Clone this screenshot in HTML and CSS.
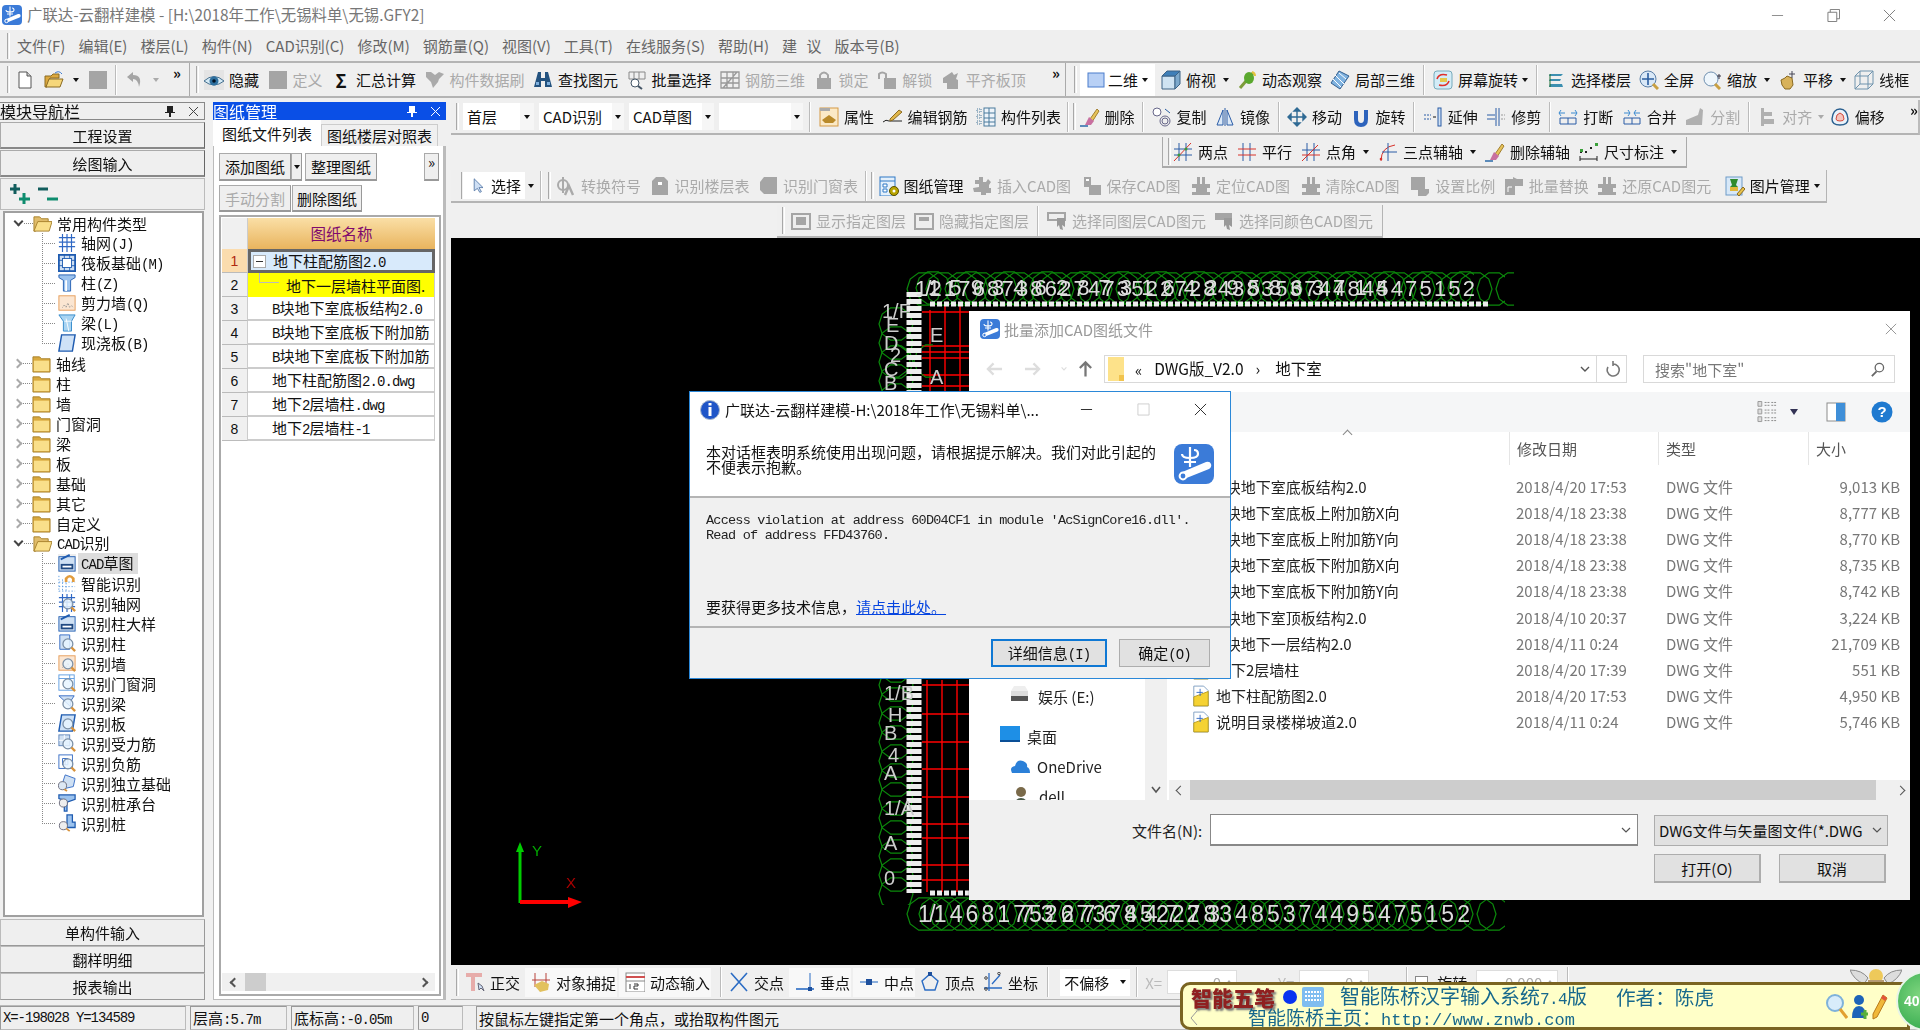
FILE: index.html
```html
<!DOCTYPE html>
<html lang="zh-CN">
<head>
<meta charset="utf-8">
<title>广联达-云翻样建模</title>
<link rel="stylesheet" href="styles.css">
</head>
<body>
<svg class="defs" width="0" height="0">
<defs>
<symbol id="logo" viewBox="0 0 20 20"><rect width="20" height="20" rx="4" fill="#3b7bd8"/><path d="M8 1.500v10M4 5q0 2 4 2t4-2-2-2M5 9h6" stroke="#fff" stroke-width="1.100" fill="none"/><path d="M3 14.500 16 9q2-.5 2.500 1t-1 2.500L5 17.500z" fill="#fff"/><circle cx="4.500" cy="16" r="1.700" fill="#3b7bd8" stroke="#fff"/></symbol>
<symbol id="doc" viewBox="0 0 20 20"><path d="M4 2h8l4 4v12H4z" fill="#fff" stroke="#555"/><path d="M12 2v4h4" fill="#ccc" stroke="#555"/></symbol>
<symbol id="open" viewBox="0 0 20 20"><path d="M1 6h6l2-2h6v4H6L3 17H1z" fill="#dca83e" stroke="#8a6a22"/><path d="M5 9h14l-3 8H2z" fill="#f6d77a" stroke="#8a6a22"/><path d="M11 3q4-3 7 1" stroke="#3a7bd5" fill="none"/></symbol>
<symbol id="gsq" viewBox="0 0 20 20"><rect x="1" y="1" width="18" height="18" fill="#a5a5a5"/></symbol>
<symbol id="undo" viewBox="0 0 20 20"><path d="M8 2 2 7l6 5V9q5 0 6 8 4-12-6-12z" fill="#a5a5a5"/></symbol>
<symbol id="eye" viewBox="0 0 20 20"><rect width="20" height="20" fill="#e4e4e4"/><path d="M0 11q10-9 20 0-10 8-20 0z" fill="#d5eaf5" stroke="#47708f"/><circle cx="10" cy="11" r="4.500" fill="#2d6f9e"/><circle cx="10" cy="11" r="1.800" fill="#012"/></symbol>
<symbol id="gbrush" viewBox="0 0 20 20"><path d="M1 2h5l4 3 4-3 5 2-5 5-1 3-5 6-2-6-5-5z" fill="#aaa"/></symbol>
<symbol id="binoc" viewBox="0 0 20 20"><path d="M5 2h3v6h4V2h3l4 15h-7V11H8v6H1z" fill="#23527f"/><path d="M3 12h3v3H3zM14 12h3v3h-3z" fill="#7fb0de"/></symbol>
<symbol id="batch" viewBox="0 0 20 20"><path d="M2 2h16v7H2z" fill="none" stroke="#888"/><path d="M7 2v7M12 2v7" stroke="#888"/><circle cx="8" cy="13" r="4" fill="#fff" stroke="#456"/><path d="m11 16 4 3" stroke="#456" stroke-width="2"/></symbol>
<symbol id="g3d" viewBox="0 0 20 20"><path d="M1 2h18v16H1zM7 2v16M13 2v16M1 8h18M1 13h18M3 18 17 2" fill="none" stroke="#999" stroke-width="1.300"/></symbol>
<symbol id="lock" viewBox="0 0 20 20"><path d="M6 9V5q4-5 8 0v4" fill="none" stroke="#a5a5a5" stroke-width="2"/><rect x="3" y="8" width="14" height="11" fill="#a5a5a5"/></symbol>
<symbol id="unlock" viewBox="0 0 20 20"><path d="M2 9V4q3-3 7 0v5" fill="none" stroke="#a5a5a5" stroke-width="2"/><rect x="7" y="8" width="12" height="11" fill="#a5a5a5"/></symbol>
<symbol id="gflag" viewBox="0 0 20 20"><path d="M2 8 11 2l2 3 4-2-2 6 2 1v9H6v-6H2z" fill="#a5a5a5"/></symbol>
<symbol id="r2d" viewBox="0 0 20 20"><rect x="2" y="3" width="16" height="14" fill="#b8d0f5" stroke="#4a7ccc"/></symbol>
<symbol id="cube" viewBox="0 0 20 20"><path d="M1 6h13v13H1z" fill="#cfe3f2" stroke="#3c6285"/><path d="m1 6 5-5h13l-5 5z" fill="#3f7fb8" stroke="#3c6285"/><path d="m14 6 5-5v13l-5 5z" fill="#7da9cc" stroke="#3c6285"/></symbol>
<symbol id="orbit" viewBox="0 0 20 20"><path d="M3 18 16 3" stroke="#7d9c3a" stroke-width="3"/><ellipse cx="12" cy="8" rx="5" ry="6" fill="#5aa82e"/><path d="M15 2q3 1 3 4" stroke="#e3c33e" stroke-width="2" fill="none"/></symbol>
<symbol id="local3d" viewBox="0 0 20 20"><path d="m9 1 10 5-9 13L1 13z" fill="#7fb2e0" stroke="#345f8f"/><path d="m5 5 9 9M9 3l7 6M3 9l8 8" stroke="#fff"/></symbol>
<symbol id="scrrot" viewBox="0 0 20 20"><rect x="1" y="1" width="18" height="18" rx="3" fill="#d3ecf7" stroke="#7ab"/><path d="M4 9q2-6 10-4M16 11q-2 6-10 4" stroke="#e0302a" stroke-width="1.600" fill="none"/><rect x="7" y="8" width="7" height="4" fill="#e6c84a"/></symbol>
<symbol id="floors" viewBox="0 0 20 20"><path d="M4 4h13l-2 2H3zM4 9h11l-1 2H3zM4 14h12l1 3H3z" fill="#3c8fb0"/><path d="M4 4v13" stroke="#1d6c2e"/></symbol>
<symbol id="full" viewBox="0 0 20 20"><circle cx="9" cy="9" r="8" fill="#d9e8f7" stroke="#5a7ea6"/><path d="M9 3v12M3 9h12" stroke="#2a5da0" stroke-width="1.600"/><path d="m14 14 5 5" stroke="#c9a042" stroke-width="3"/></symbol>
<symbol id="zoomi" viewBox="0 0 20 20"><circle cx="9" cy="9" r="7" fill="#eef6fc" stroke="#7090b0"/><path d="m13 14 5 5" stroke="#c9a042" stroke-width="3"/><path d="M17 4v5M15 6h4" stroke="#334"/></symbol>
<symbol id="hand" viewBox="0 0 20 20"><path d="M3 10 7 8l2-2 5 2 1 7-3 4H7l-3-4z" fill="#d8b25a" stroke="#8a6a22"/><path d="M14 1v7M11 4h6" stroke="#445"/></symbol>
<symbol id="wire" viewBox="0 0 20 20"><path d="M1 6h13v13H1zM1 6l5-5h13v13l-5 5M14 6l5-5M6 1v13h13M6 14l-5 5" fill="none" stroke="#6f93ad"/></symbol>
<symbol id="props" viewBox="0 0 20 20"><rect x="1" y="1" width="18" height="18" fill="#fbe9c6" stroke="#d59a45"/><path d="M1 1h10v3H1z" fill="#aaa"/><path d="m3 13 7-5 7 5-3 3H6z" fill="#b98a2a"/></symbol>
<symbol id="pen" viewBox="0 0 20 20"><path d="M0 15q3-3 6-1h13" fill="none" stroke="#222"/><path d="m7 12 9-9 3 2-9 8-3 1z" fill="#e0b64a" stroke="#8a6a22"/></symbol>
<symbol id="list" viewBox="0 0 20 20"><path d="M1 2h4v3H1zM1 8h4v3H1zM1 14h4v3H1z" fill="none" stroke="#4a7a9c" stroke-dasharray="1 1"/><rect x="8" y="1" width="11" height="18" fill="#eef4fa" stroke="#4a7a9c"/><path d="M8 6h11M8 11h11M8 15h11M13 1v18" stroke="#4a7a9c"/></symbol>
<symbol id="del" viewBox="0 0 20 20"><path d="m10 12 7-10 2 2-7 11z" fill="#e6c35a" stroke="#a27f30"/><path d="m5 18 4-8 5 4-3 4z" fill="#c870a0"/><path d="M0 19h8" stroke="#2a6aa8" stroke-width="1.500"/></symbol>
<symbol id="copy" viewBox="0 0 20 20"><circle cx="5" cy="5" r="4" fill="#fff" stroke="#668"/><circle cx="13" cy="14" r="5" fill="none" stroke="#668"/><circle cx="13" cy="14" r="3" fill="none" stroke="#668"/><path d="M13 2l5 4" stroke="#2a5da0"/></symbol>
<symbol id="mirror" viewBox="0 0 20 20"><path d="M8 3 2 18h6zM12 3l6 15h-6z" fill="#dce9f7" stroke="#2b5ca6"/><path d="M10 1v18" stroke="#2b5ca6"/></symbol>
<symbol id="move" viewBox="0 0 20 20"><path d="M10 1v18M1 10h18M10 1 7 4h6zM10 19l-3-3h6zM1 10l3-3v6zM19 10l-3-3v6z" fill="#2f6a94" stroke="#2f6a94" stroke-width="1.400"/></symbol>
<symbol id="rot" viewBox="0 0 20 20"><path d="M5 4v8q0 6 5 6t5-6V3" fill="none" stroke="#2d63bc" stroke-width="4"/></symbol>
<symbol id="extend" viewBox="0 0 20 20"><path d="M1 8h7M1 12h7" stroke="#2b5ca6" stroke-dasharray="2 1"/><path d="M10 10h3" stroke="#111"/><rect x="15" y="1" width="3" height="18" fill="#cfe0f3" stroke="#2b5ca6"/></symbol>
<symbol id="trim" viewBox="0 0 20 20"><path d="M1 8h8M1 12h8" stroke="#2b5ca6"/><path d="M10 1v18M13 1v18" stroke="#2b5ca6"/><path d="M15 8h4M15 12h4" stroke="#999" stroke-dasharray="2 1"/></symbol>
<symbol id="brk" viewBox="0 0 20 20"><path d="M2 11h16v6H2zM10 11v6" fill="none" stroke="#2b5ca6"/><path d="M1 6h6M13 6h6M3 3 1 6l2 3M17 3l2 3-2 3" stroke="#3a8ad0" fill="none"/></symbol>
<symbol id="merge" viewBox="0 0 20 20"><path d="M2 11h16v6H2zM10 11v6" fill="none" stroke="#2b5ca6"/><path d="M2 6h6M12 6h6M6 3l2 3-2 3M14 3l-2 3 2 3" stroke="#3a8ad0" fill="none"/></symbol>
<symbol id="gsplit" viewBox="0 0 20 20"><path d="M1 13 13 8l2-7 3 2-1 15H1z" fill="#b0b0b0"/></symbol>
<symbol id="galign" viewBox="0 0 20 20"><path d="M4 1h3v18H4zM7 5h8v4H7zM7 12h10v5H7z" fill="#b0b0b0"/></symbol>
<symbol id="offs" viewBox="0 0 20 20"><path d="M10 2q7 0 8 10 0 6-8 6t-8-6Q3 2 10 2z" fill="#eaf2fa" stroke="#2a5f8f" stroke-width="1.400"/><path d="M10 6q4 1 4 6 0 2-4 2t-4-2q0-5 4-6z" fill="#f6c4bc" stroke="#d34a3c"/></symbol>
<symbol id="twop" viewBox="0 0 20 20"><path d="M6 1v18M13 1v18M1 7h18M1 13h18" stroke="#2b5ca6"/><path d="M1 19 18 1" stroke="#d8322a"/><circle cx="6" cy="13" r="1.500" fill="#3a9a3a"/><circle cx="13" cy="7" r="1.500" fill="#3a9a3a"/></symbol>
<symbol id="para" viewBox="0 0 20 20"><path d="M6 1v18M13 1v18" stroke="#2b5ca6"/><path d="M1 7h18M1 13h18" stroke="#d8322a"/></symbol>
<symbol id="ang" viewBox="0 0 20 20"><path d="M6 1v18M13 1v18M1 8h18" stroke="#2b5ca6"/><path d="M1 19 17 3M1 13h18" stroke="#d8322a"/></symbol>
<symbol id="arcx" viewBox="0 0 20 20"><path d="M3 19Q3 5 17 3" fill="none" stroke="#d8322a"/><path d="M10 1v18M4 10h15" stroke="#2b5ca6"/><circle cx="3" cy="17" r="1.300" fill="#d8322a"/></symbol>
<symbol id="dim" viewBox="0 0 20 20"><path d="M1 14v5M18 14v5M1 17h17" stroke="#222"/><path d="M1 9h2v2H1zM6 9h2v2H6zM11 5h2v2h-2z" fill="#222"/><rect x="16" y="1" width="3" height="3" fill="#3aa03a"/><rect x="1" y="7" width="3" height="3" fill="#3aa03a"/></symbol>
<symbol id="cur" viewBox="0 0 20 20"><path d="m4 1 0 15 4-3 3 5 2-1-3-5h5z" fill="#cfe0f5" stroke="#4a6ea0"/></symbol>
<symbol id="gphi" viewBox="0 0 20 20"><circle cx="7" cy="9" r="5" fill="none" stroke="#aaa" stroke-width="2"/><path d="M7 1v16" stroke="#aaa" stroke-width="2"/><path d="m9 19 4-9 4 9" fill="none" stroke="#aaa" stroke-width="2.400"/></symbol>
<symbol id="gtag" viewBox="0 0 20 20"><path d="M6 1h8l4 4v14H2V5z" fill="#a5a5a5"/><rect x="8" y="6" width="4" height="3" fill="#fff"/></symbol>
<symbol id="gblob" viewBox="0 0 20 20"><path d="M6 1h13v17H6L2 14V6z" fill="#a5a5a5"/></symbol>
<symbol id="dmgr" viewBox="0 0 20 20"><rect x="1" y="1" width="15" height="19" fill="#e4f0fb" stroke="#2f78c5"/><path d="M1 5h15M4 8h4v3H4zM4 13h4v3H4z" stroke="#2f78c5" fill="#fff"/><circle cx="15" cy="15" r="4.500" fill="#b8a400" stroke="#5a5000"/><circle cx="15" cy="15" r="1.500" fill="#fff"/></symbol>
<symbol id="gpuz" viewBox="0 0 20 20"><path d="M7 1h4v5h3l2-3 3 3-2 3v3h2v5h-5v2h-5v-3H2l-1-4 6-1V8H3V4h4z" fill="#a5a5a5"/></symbol>
<symbol id="gsave" viewBox="0 0 20 20"><path d="M2 1h7v8h10v10H7V11H2z" fill="#a5a5a5"/><rect x="4" y="3" width="3" height="2" fill="#fff"/></symbol>
<symbol id="gloc" viewBox="0 0 20 20"><path d="M6 1h3v7h2V1h3v7h5v4h-3v4h3v3H1v-3h4v-4H1V8h5z" fill="#a5a5a5"/></symbol>
<symbol id="gscale" viewBox="0 0 20 20"><path d="M1 1h14v12h4v4l-3 3H8v-6H1z" fill="#a5a5a5"/></symbol>
<symbol id="grep" viewBox="0 0 20 20"><path d="M1 3h8V1l4 2h6v7h-8v9H1z" fill="#a5a5a5"/><path d="M4 11h4M4 11v5" stroke="#fff"/></symbol>
<symbol id="pic" viewBox="0 0 20 20"><rect x="1" y="1" width="16" height="18" fill="#d7e8f8" stroke="#6f9bc8"/><path d="M5 3h8l-2 6 2 2H5l2-2z" fill="#2e8b2e"/><path d="M5 11h8v4H5z" fill="#e0b83a"/><path d="m12 18 6-7 2 2-6 7z" fill="#e8c24a" stroke="#8a6a22"/></symbol>
<symbol id="gshow" viewBox="0 0 20 20"><path d="M1 3h18v15H1z" fill="#eee" stroke="#a5a5a5" stroke-width="2"/><path d="M5 6h10v8H5z" fill="#a5a5a5"/></symbol>
<symbol id="ghide" viewBox="0 0 20 20"><path d="M1 3h18v15H1z" fill="#eee" stroke="#a5a5a5" stroke-width="2"/><path d="M5 6h10v4H5z" fill="#a5a5a5"/></symbol>
<symbol id="gsel" viewBox="0 0 20 20"><path d="M1 2h17v7H1z" fill="#eee" stroke="#a5a5a5" stroke-width="2"/><path d="M10 7h8v9l-3-2 1 5-3-1-1-4-2 2z" fill="#999"/></symbol>
<symbol id="gsel2" viewBox="0 0 20 20"><path d="M1 2h17v7H1z" fill="#a5a5a5"/><path d="M10 7h8v9l-3-2 1 5-3-1-1-4-2 2z" fill="#999"/></symbol>
<symbol id="ortho" viewBox="0 0 20 20"><path d="M1 1h16v4h-7v14H6V5H1z" fill="#e7acaa"/><path d="m13 11 1 7 2-2 3 3-2-5z" fill="#cfe0f5" stroke="#667"/></symbol>
<symbol id="snap" viewBox="0 0 20 20"><path d="M4 1v14M15 1v14M1 8h18" stroke="#b8433a"/><path d="m3 13 8-4 7 3-1 6-8 2z" fill="#e2c15e"/></symbol>
<symbol id="dyni" viewBox="0 0 20 20"><rect x="1" y="1" width="19" height="19" fill="#fff" stroke="#888"/><path d="M1 5h19" stroke="#d05050" stroke-width="2"/><path d="M1 9h19" stroke="#888"/><path d="M5 12v5M9 12h4v2h-4v3h4" fill="none" stroke="#333"/></symbol>
<symbol id="xpt" viewBox="0 0 20 20"><path d="m2 1 16 18M18 1 2 19" stroke="#2b6cc4" stroke-width="1.600"/></symbol>
<symbol id="perp" viewBox="0 0 20 20"><path d="M1 17h18" stroke="#2b6cc4" stroke-width="1.600"/><path d="M15 1v16" stroke="#2b6cc4"/><rect x="13" y="15" width="4" height="4" fill="#1d4f9c"/></symbol>
<symbol id="midp" viewBox="0 0 20 20"><path d="M1 10h18" stroke="#5b8fd0" stroke-width="1.400"/><rect x="7" y="7" width="6" height="6" fill="#1d4f9c"/></symbol>
<symbol id="vert" viewBox="0 0 20 20"><path d="m10 2 8 7-3 9H5L2 9z" fill="none" stroke="#2b6cc4" stroke-width="1.400"/><rect x="8" y="0" width="4" height="4" fill="#1d4f9c"/></symbol>
<symbol id="coord" viewBox="0 0 20 20"><path d="M6 1v18M1 16h18M17 3 9 12" stroke="#2b6cc4" stroke-width="1.300"/><circle cx="3" cy="6" r="1.300" fill="none" stroke="#444"/><circle cx="16" cy="1.500" r="1.300" fill="none" stroke="#444"/><circle cx="3" cy="17" r="1.300" fill="none" stroke="#444"/></symbol>
<symbol id="fold" viewBox="0 0 20 20"><path d="M1 3h7l2 2h9v14H1z" fill="#d9a93e" stroke="#a8822c"/><path d="M2 7h16v11H2z" fill="#f9df8a"/></symbol>
<symbol id="foldo" viewBox="0 0 20 20"><path d="M1 3h6l2 2h7v4H6L3 18H1z" fill="#e0bc6a" stroke="#a8822c"/><path d="M5 8h15l-3 10H1z" fill="#f9df8a" stroke="#a8822c"/></symbol>
<symbol id="gridi" viewBox="0 0 20 20"><path d="M5 0v20M10 0v20M15 0v20M1 4h18M1 9h18M1 14h18" stroke="#2f68c4" stroke-width="1.300"/></symbol>
<symbol id="raft" viewBox="0 0 20 20"><rect x="1" y="1" width="18" height="18" fill="#cfe0f3" stroke="#1e5bb0" stroke-width="2"/><rect x="5" y="5" width="10" height="10" fill="#fff" stroke="#1e5bb0"/><path d="M1 7h4M1 13h4M15 7h4M15 13h4M7 1v4M13 1v4M7 15v4M13 15v4" stroke="#1e5bb0"/></symbol>
<symbol id="colm" viewBox="0 0 20 20"><path d="M1 1h18v3l-5 3v12H6V7L1 4z" fill="#9cc3ee" stroke="#1e5bb0"/><path d="M9 7v12" stroke="#fff" stroke-width="2"/></symbol>
<symbol id="walli" viewBox="0 0 20 20"><rect x="1" y="2" width="18" height="16" fill="#fbe6d2" stroke="#e59a55"/><path d="M5 15l2-3 2 3 2-5 2 5 2-2 2 2" stroke="#8a8a8a" fill="none" stroke-dasharray="1 1"/></symbol>
<symbol id="beam" viewBox="0 0 20 20"><path d="M1 1h18l-4 7v11H6V8z" fill="#a9d4f2" stroke="#2d86c8"/><path d="M7 8h8M9 5l3 14" stroke="#fff"/></symbol>
<symbol id="slab" viewBox="0 0 20 20"><path d="M4 1h15l-3 18H1z" fill="#cfe2f7" stroke="#1e5bb0" stroke-width="1.600"/></symbol>
<symbol id="cad" viewBox="0 0 20 20"><rect x="1" y="3" width="18" height="16" fill="#cfe0f3" stroke="#1e5bb0"/><path d="m3 6 10-5" stroke="#1e5bb0" stroke-width="2"/><rect x="3" y="11" width="14" height="6" fill="#214a82"/><rect x="5" y="13" width="10" height="2" fill="#fff"/></symbol>
<symbol id="smart" viewBox="0 0 20 20"><path d="M1 2v18M5 6v14M9 10v10M1 9h18M1 14h18M1 19h18" stroke="#5a9ae0" stroke-dasharray="1.500 2"/><path d="M9 9V5q4-5 8 0v4" fill="none" stroke="#e29c3c" stroke-width="3"/></symbol>
<symbol id="mag" viewBox="0 0 20 20"><circle cx="11" cy="11" r="5.500" fill="#e8f4ff" fill-opacity=".85" stroke="#7a8ea4" stroke-width="1.400"/><path d="m15 15 4 4" stroke="#d8923a" stroke-width="2.600"/></symbol>
<symbol id="r1" viewBox="0 0 20 20"><use href="#gridi"/><use href="#mag"/></symbol>
<symbol id="r2" viewBox="0 0 20 20"><path d="M2 1h11v16H2z" fill="#cfe0f3" stroke="#2f68c4"/><use href="#mag"/></symbol>
<symbol id="r3" viewBox="0 0 20 20"><use href="#walli"/><use href="#mag"/></symbol>
<symbol id="r4" viewBox="0 0 20 20"><rect x="1" y="1" width="17" height="17" fill="#fff" stroke="#5a9ae0"/><path d="M13 1v8M1 5h17" stroke="#5a9ae0"/><use href="#mag"/></symbol>
<symbol id="r5" viewBox="0 0 20 20"><path d="M1 2h17l-4 6v6z" fill="#cfe0f3" stroke="#2f68c4"/><use href="#mag"/></symbol>
<symbol id="r6" viewBox="0 0 20 20"><use href="#slab"/><use href="#mag"/></symbol>
<symbol id="r7" viewBox="0 0 20 20"><rect x="1" y="1" width="12" height="12" fill="#cfe0f3" stroke="#5a80b8"/><path d="M7 1v12M1 7h12" stroke="#fff"/><use href="#mag"/></symbol>
<symbol id="r8" viewBox="0 0 20 20"><rect x="1" y="1" width="15" height="15" fill="#fff" stroke="#2f68c4"/><path d="M5 5h6v7H5zM8 5v7" fill="none" stroke="#2f68c4"/><use href="#mag"/></symbol>
<symbol id="r9" viewBox="0 0 20 20"><path d="m8 1 11 4-2 9-9 2-3-6z" fill="#cfe0f3" stroke="#2f68c4"/><circle cx="5" cy="13" r="4.500" fill="#dde8f4" stroke="#667"/><path d="m7 17 3 2" stroke="#d8923a" stroke-width="2"/></symbol>
<symbol id="r10" viewBox="0 0 20 20"><path d="M1 1h18v5l-9 3v10H7V7L1 5z" fill="#9cc3ee" stroke="#1e5bb0" stroke-width="1.400"/><circle cx="6" cy="10" r="4.500" fill="#eee" stroke="#667"/></symbol>
<symbol id="r11" viewBox="0 0 20 20"><path d="M10 1h6v8h3v6H10z" fill="#9cc3ee" stroke="#1e5bb0" stroke-width="1.400"/><circle cx="6" cy="13" r="4.500" fill="#eee" stroke="#667"/><path d="m9 16 4 3" stroke="#d8923a" stroke-width="2"/></symbol>
<symbol id="dwg" viewBox="0 0 20 24"><path d="M2 1h11l5 5v17H2z" fill="#fff" stroke="#7a9cc0"/><path d="M2 13 18 7v16H2z" fill="#f5d233" stroke="#b89a1a"/><path d="M5 8h7M9 4v8" stroke="#2f68c4"/></symbol>
<symbol id="info" viewBox="0 0 20 20"><circle cx="10" cy="10" r="9.500" fill="#1f55c8" stroke="#a9b7cc"/><rect x="8.500" y="7" width="3" height="9" fill="#fff"/><rect x="8.500" y="3" width="3" height="2.500" fill="#fff"/></symbol>
<polygon id="ring" points="36,19 32.8,29 24.3,35.2 13.7,35.2 5.2,29 2,19 5.2,9 13.7,2.8 24.3,2.8 32.8,9" fill="none" stroke="#0a8a0a" stroke-width="1.200"/>
<pattern id="rp" width="38" height="38" patternUnits="userSpaceOnUse"><use href="#ring"/></pattern>
</defs>
</svg>

<div class="app">
  <div class="titlebar">
    <svg class="tlogo"><use href="#logo"/></svg>
    <span class="ttext">广联达-云翻样建模 - [H:\2018年工作\无锡料单\无锡.GFY2]</span>
    <span class="wbtns">
      <svg class="wb" viewBox="0 0 14 14"><path d="M1 7h12" stroke="#888"/></svg>
      <svg class="wb" viewBox="0 0 14 14"><path d="M1 3.500h9.500v10H1zM3.500 3.500V.5h10v10h-3" fill="none" stroke="#777"/></svg>
      <svg class="wb" viewBox="0 0 14 14"><path d="m1 1 12 12M13 1 1 13" stroke="#777"/></svg>
    </span>
  </div>
  <div class="menubar">
    <i class="gr"></i>
    <span>文件(F)</span><span>编辑(E)</span><span>楼层(L)</span><span>构件(N)</span><span>CAD识别(C)</span><span>修改(M)</span><span>钢筋量(Q)</span><span>视图(V)</span><span>工具(T)</span><span>在线服务(S)</span><span>帮助(H)</span><span class="sugg">建 议</span><span>版本号(B)</span>
  </div>
  <div class="toolrow r1">
    <div class="seg s1a">
      <i class="gr"></i>
      <svg class="ic ic-doc"><use href="#doc"/></svg>
      <svg class="ic ic-open"><use href="#open"/></svg><i class="dn"></i>
      <svg class="ic ic-save"><use href="#gsq"/></svg><i class="vs"></i>
      <svg class="ic ic-undo"><use href="#undo"/></svg><i class="dn dis"></i>
      <b class="more">»</b>
    </div>
    <div class="seg s1b">
      <i class="gr"></i>
      <span class="it"><svg class="ic"><use href="#eye"/></svg>隐藏</span>
      <span class="it off"><svg class="ic"><use href="#gsq"/></svg>定义</span>
      <span class="it"><em class="ic sg">Σ</em>汇总计算</span>
      <span class="it off"><svg class="ic"><use href="#gbrush"/></svg>构件数据刷</span>
      <span class="it"><svg class="ic"><use href="#binoc"/></svg>查找图元</span>
      <span class="it"><svg class="ic"><use href="#batch"/></svg>批量选择</span>
      <span class="it off"><svg class="ic"><use href="#g3d"/></svg>钢筋三维</span>
      <span class="it off"><svg class="ic"><use href="#lock"/></svg>锁定</span>
      <span class="it off"><svg class="ic"><use href="#unlock"/></svg>解锁</span>
      <span class="it off"><svg class="ic"><use href="#gflag"/></svg>平齐板顶</span>
      <b class="more">»</b>
    </div>
    <div class="seg s1c">
      <i class="gr"></i>
      <span class="it whitebox"><svg class="ic"><use href="#r2d"/></svg>二维<i class="dn"></i></span>
      <span class="it"><svg class="ic"><use href="#cube"/></svg>俯视<i class="dn"></i></span>
      <span class="it"><svg class="ic"><use href="#orbit"/></svg>动态观察</span>
      <span class="it"><svg class="ic"><use href="#local3d"/></svg>局部三维</span><i class="vs"></i>
      <span class="it"><svg class="ic"><use href="#scrrot"/></svg>屏幕旋转<i class="dn tight"></i></span><i class="vs"></i>
      <span class="it"><svg class="ic"><use href="#floors"/></svg>选择楼层</span>
      <span class="it"><svg class="ic"><use href="#full"/></svg>全屏</span>
      <span class="it"><svg class="ic"><use href="#zoomi"/></svg>缩放<i class="dn"></i></span>
      <span class="it"><svg class="ic"><use href="#hand"/></svg>平移<i class="dn"></i></span>
      <span class="it"><svg class="ic"><use href="#wire"/></svg>线框</span>
    </div>
  </div>

  <div class="main">
    <aside class="nav">
      <div class="phead"><span>模块导航栏</span><span class="ptools"><svg class="pin"><path d="M3 1h6v6h2v1H7v4H5V8H1V7h2z" fill="#222"/></svg><svg class="pin"><path d="m2 2 9 9M11 2l-9 9" stroke="#444"/></svg></span></div>
      <div class="navbtn nb1">工程设置</div>
      <div class="navbtn nb2">绘图输入</div>
      <div class="navtools">
        <svg class="pm" viewBox="0 0 22 22"><path d="M6 1v10M1 6h10" stroke="#125d5d" stroke-width="3"/><path d="M15 10v11M10 16h11" stroke="#0e8c6e" stroke-width="3"/></svg>
        <svg class="pm" viewBox="0 0 22 22"><path d="M1 6h10" stroke="#125d5d" stroke-width="3"/><path d="M10 16h11" stroke="#0e8c6e" stroke-width="3"/></svg>
      </div>
      <div class="tree">
        <div class="n"><i class="chev dn-c"></i><i class="st"></i><svg class="fi"><use href="#foldo"/></svg>常用构件类型</div>
        <div class="kids">
          <div class="k"><i class="br"></i><svg class="ti"><use href="#gridi"/></svg><span>轴网<tt>(J)</tt></span></div>
          <div class="k"><i class="br"></i><svg class="ti"><use href="#raft"/></svg><span>筏板基础<tt>(M)</tt></span></div>
          <div class="k"><i class="br"></i><svg class="ti"><use href="#colm"/></svg><span>柱<tt>(Z)</tt></span></div>
          <div class="k"><i class="br"></i><svg class="ti"><use href="#walli"/></svg><span>剪力墙<tt>(Q)</tt></span></div>
          <div class="k"><i class="br"></i><svg class="ti"><use href="#beam"/></svg><span>梁<tt>(L)</tt></span></div>
          <div class="k"><i class="br"></i><svg class="ti"><use href="#slab"/></svg><span>现浇板<tt>(B)</tt></span></div>
        </div>
        <div class="n"><i class="chev"></i><i class="st"></i><svg class="fi"><use href="#fold"/></svg>轴线</div>
        <div class="n"><i class="chev"></i><i class="st"></i><svg class="fi"><use href="#fold"/></svg>柱</div>
        <div class="n"><i class="chev"></i><i class="st"></i><svg class="fi"><use href="#fold"/></svg>墙</div>
        <div class="n"><i class="chev"></i><i class="st"></i><svg class="fi"><use href="#fold"/></svg>门窗洞</div>
        <div class="n"><i class="chev"></i><i class="st"></i><svg class="fi"><use href="#fold"/></svg>梁</div>
        <div class="n"><i class="chev"></i><i class="st"></i><svg class="fi"><use href="#fold"/></svg>板</div>
        <div class="n"><i class="chev"></i><i class="st"></i><svg class="fi"><use href="#fold"/></svg>基础</div>
        <div class="n"><i class="chev"></i><i class="st"></i><svg class="fi"><use href="#fold"/></svg>其它</div>
        <div class="n"><i class="chev"></i><i class="st"></i><svg class="fi"><use href="#fold"/></svg>自定义</div>
        <div class="n"><i class="chev dn-c"></i><i class="st"></i><svg class="fi"><use href="#foldo"/></svg><span><tt>CAD</tt>识别</span></div>
        <div class="kids">
          <div class="k sel"><i class="br"></i><svg class="ti"><use href="#cad"/></svg><span class="selt"><tt>CAD</tt>草图</span></div>
          <div class="k"><i class="br"></i><svg class="ti"><use href="#smart"/></svg>智能识别</div>
          <div class="k"><i class="br"></i><svg class="ti"><use href="#r1"/></svg>识别轴网</div>
          <div class="k"><i class="br"></i><svg class="ti"><use href="#cad"/></svg>识别柱大样</div>
          <div class="k"><i class="br"></i><svg class="ti"><use href="#r2"/></svg>识别柱</div>
          <div class="k"><i class="br"></i><svg class="ti"><use href="#r3"/></svg>识别墙</div>
          <div class="k"><i class="br"></i><svg class="ti"><use href="#r4"/></svg>识别门窗洞</div>
          <div class="k"><i class="br"></i><svg class="ti"><use href="#r5"/></svg>识别梁</div>
          <div class="k"><i class="br"></i><svg class="ti"><use href="#r6"/></svg>识别板</div>
          <div class="k"><i class="br"></i><svg class="ti"><use href="#r7"/></svg>识别受力筋</div>
          <div class="k"><i class="br"></i><svg class="ti"><use href="#r8"/></svg>识别负筋</div>
          <div class="k"><i class="br"></i><svg class="ti"><use href="#r9"/></svg>识别独立基础</div>
          <div class="k"><i class="br"></i><svg class="ti"><use href="#r10"/></svg>识别桩承台</div>
          <div class="k"><i class="br"></i><svg class="ti"><use href="#r11"/></svg>识别桩</div>
        </div>
      </div>
      <div class="navbtn lo">单构件输入</div>
      <div class="navbtn lo">翻样明细</div>
      <div class="navbtn lo">报表输出</div>
    </aside>

    <section class="dwgp">
      <div class="phead blue"><span>图纸管理</span><span class="ptools"><svg class="pin"><path d="M3 1h6v6h2v1H7v4H5V8H1V7h2z" fill="#fff"/></svg><svg class="pin"><path d="m2 2 9 9M11 2l-9 9" stroke="#fff"/></svg></span></div>
      <div class="tabs"><span class="tab on">图纸文件列表</span><span class="tab">图纸楼层对照表</span></div>
      <div class="pane">
        <div class="pbtns">
          <span class="pb w72">添加图纸</span><span class="pb w10"><i class="dn"></i></span><span class="pb w72 gapl">整理图纸</span><span class="pb pmore"><b>»</b></span>
        </div>
        <div class="pbtns b2">
          <span class="pb w72 dis">手动分割</span><span class="pb w70">删除图纸</span>
        </div>
        <div class="frame">
          <div class="dg">
            <div class="rh top"></div><div class="dh">图纸名称</div>
            <div class="rh cur1">1</div><div class="dc cur"><i class="minus"></i><span>地下柱配筋图<tt>2.0</tt></span></div>
            <div class="rh">2</div><div class="dc yel"><i class="ell"></i><span>地下一层墙柱平面图.</span></div>
            <div class="rh">3</div><div class="dc ind"><span><tt>B</tt>块地下室底板结构<tt>2.0</tt></span></div>
            <div class="rh">4</div><div class="dc ind"><span><tt>B</tt>块地下室底板下附加筋</span></div>
            <div class="rh">5</div><div class="dc ind"><span><tt>B</tt>块地下室底板下附加筋</span></div>
            <div class="rh">6</div><div class="dc ind"><span>地下柱配筋图<tt>2.0.dwg</tt></span></div>
            <div class="rh">7</div><div class="dc ind"><span>地下<tt>2</tt>层墙柱<tt>.dwg</tt></span></div>
            <div class="rh">8</div><div class="dc ind"><span>地下<tt>2</tt>层墙柱<tt>-1</tt></span></div>
          </div>
          <div class="hs"><i class="cl"></i><i class="thumb"></i><i class="cr"></i></div>
        </div>
      </div>
    </section>

    <section class="work">
      <div class="toolrow r2">
        <i class="gr g1"></i>
        <div class="flds">
          <div class="fld"><span class="cb w57">首层</span><i class="ca ca14"><i class="dn"></i></i></div>
          <div class="fld"><span class="cb w73">CAD识别</span><i class="ca"><i class="dn"></i></i></div>
          <div class="fld"><span class="cb w73">CAD草图</span><i class="ca"><i class="dn"></i></i></div>
          <div class="fld"><span class="cb w72"></span><i class="ca"><i class="dn"></i></i></div>
        </div>
        <i class="vs v6"></i>
        <span class="it"><svg class="ic"><use href="#props"/></svg>属性</span>
        <span class="it"><svg class="ic"><use href="#pen"/></svg>编辑钢筋</span>
        <span class="it"><svg class="ic"><use href="#list"/></svg>构件列表</span>
        <i class="vs v6"></i><i class="gr g2"></i>
        <span class="it"><svg class="ic"><use href="#del"/></svg>删除</span><i class="vs"></i>
        <span class="it"><svg class="ic"><use href="#copy"/></svg>复制</span>
        <span class="it"><svg class="ic"><use href="#mirror"/></svg>镜像</span><i class="vs"></i>
        <span class="it"><svg class="ic"><use href="#move"/></svg>移动</span>
        <span class="it"><svg class="ic"><use href="#rot"/></svg>旋转</span><i class="vs"></i>
        <span class="it"><svg class="ic"><use href="#extend"/></svg>延伸</span>
        <span class="it"><svg class="ic"><use href="#trim"/></svg>修剪</span><i class="vs"></i>
        <span class="it"><svg class="ic"><use href="#brk"/></svg>打断</span>
        <span class="it"><svg class="ic"><use href="#merge"/></svg>合并</span>
        <span class="it off"><svg class="ic"><use href="#gsplit"/></svg>分割</span><i class="vs"></i>
        <span class="it off"><svg class="ic"><use href="#galign"/></svg>对齐<i class="dn dis"></i></span>
        <span class="it"><svg class="ic"><use href="#offs"/></svg>偏移</span>
        <b class="more">»</b>
      </div>
      <div class="rowwrap rw3">
        <div class="toolrow r3">
          <i class="gr"></i>
          <span class="it"><svg class="ic"><use href="#twop"/></svg>两点</span>
          <span class="it"><svg class="ic"><use href="#para"/></svg>平行</span>
          <span class="it"><svg class="ic"><use href="#ang"/></svg>点角<i class="dn"></i></span>
          <span class="it"><svg class="ic"><use href="#arcx"/></svg>三点辅轴<i class="dn"></i></span>
          <span class="it"><svg class="ic"><use href="#del"/></svg>删除辅轴</span>
          <span class="it"><svg class="ic"><use href="#dim"/></svg>尺寸标注<i class="dn"></i></span>
        </div>
      </div>
      <div class="rowwrap rw4">
        <div class="toolrow r4">
          <i class="gr gf"></i>
          <span class="it whitebox sel2"><svg class="ic"><use href="#cur"/></svg>选择</span><i class="dn dk"></i><i class="vs"></i><i class="gr"></i>
          <span class="it off"><svg class="ic"><use href="#gphi"/></svg>转换符号</span>
          <span class="it off"><svg class="ic"><use href="#gtag"/></svg>识别楼层表</span>
          <span class="it off"><svg class="ic"><use href="#gblob"/></svg>识别门窗表</span><i class="vs"></i><i class="gr g4"></i>
          <span class="it"><svg class="ic"><use href="#dmgr"/></svg>图纸管理</span>
          <span class="it off wcad"><svg class="ic"><use href="#gpuz"/></svg>插入CAD图</span>
          <span class="it off wcad"><svg class="ic"><use href="#gsave"/></svg>保存CAD图</span>
          <span class="it off wcad"><svg class="ic"><use href="#gloc"/></svg>定位CAD图</span>
          <span class="it off wcad"><svg class="ic"><use href="#gloc"/></svg>清除CAD图</span>
          <span class="it off"><svg class="ic"><use href="#gscale"/></svg>设置比例</span>
          <span class="it off"><svg class="ic"><use href="#grep"/></svg>批量替换</span>
          <span class="it off wcad2"><svg class="ic"><use href="#gloc"/></svg>还原CAD图元</span>
          <span class="it"><svg class="ic"><use href="#pic"/></svg>图片管理<i class="dn tight"></i></span>
        </div>
      </div>
      <div class="rowwrap rw5">
        <div class="toolrow r5">
          <i class="gr"></i>
          <span class="it off"><svg class="ic"><use href="#gshow"/></svg>显示指定图层</span>
          <span class="it off"><svg class="ic"><use href="#ghide"/></svg>隐藏指定图层</span><i class="vs"></i>
          <span class="it off"><svg class="ic"><use href="#gsel"/></svg>选择同图层CAD图元</span>
          <span class="it off"><svg class="ic"><use href="#gsel2"/></svg>选择同颜色CAD图元</span>
        </div>
      </div>
      <div class="canvas">
        <svg class="cadsvg" viewBox="451 238 1469 727">
          <g class="reds">
            <path d="M922 312H969M922 346H969M922 352H969M922 358H969M922 375H969M922 386H969M945 305V391M960 305V391M930 310V391M922 685H969M922 714H969M922 742H969M922 769H969M922 797H969M922 824H969M922 838H969M922 865H969M922 880H969M927 680V892M942 680V892M957 680V892"/>
          </g>
          <g transform="translate(905,270)"><rect width="600" height="38" fill="url(#rp)"/><rect width="590" height="38" fill="url(#rp)" transform="translate(19,0)"/><rect width="560" height="38" fill="url(#rp)" transform="translate(9,-1)"/></g>
          <g transform="translate(877,305)"><rect width="38" height="600" fill="url(#rp)"/><rect width="38" height="570" fill="url(#rp)" transform="translate(0,19)"/></g>
          <g transform="translate(905,895)"><rect width="600" height="38" fill="url(#rp)"/><rect width="570" height="38" fill="url(#rp)" transform="translate(23,0)"/><rect width="500" height="38" fill="url(#rp)" transform="translate(12,0)"/></g>
          <rect x="895" y="340" width="38" height="38" fill="url(#rp)"/>
          <path class="wband" d="M914 292V391M914 679V893"/>
          <path class="wband wb2" d="M930 304H1490M930 893H969"/>
          <text class="cadt" x="915" y="296" textLength="560" lengthAdjust="spacing">1/2 1 7 6 8 7 3 8 6 2 7 4 7 3 5 2 2 7 2 8 4 3 8 3 5 3 7 4 4 8 4 5 4 7 5 1 5 2</text>
          <text class="cadt" x="928" y="295" textLength="460" lengthAdjust="spacing">1 5 9 3 4 6 2 8 7 3 1 6 4 2 9 5 8 6 3 7 1 4</text>
          <text class="cadl1" x="882" y="318">1/F</text><text class="cadl1" x="886" y="332">E</text><text class="cadl1" x="884" y="350">D</text><text class="cadl1" x="890" y="362">2</text><text class="cadl1" x="884" y="376">C</text><text class="cadl1" x="884" y="390">B</text>
          <text class="cadl1" x="930" y="342">E</text><text class="cadl1" x="930" y="384">A</text>
          <text class="cadl1" x="884" y="700">1/B</text><text class="cadl1" x="888" y="722">H</text><text class="cadl1" x="884" y="740">B</text><text class="cadl1" x="888" y="762">4</text><text class="cadl1" x="884" y="780">A</text><text class="cadl1" x="884" y="815">1/A</text><text class="cadl1" x="884" y="850">A</text><text class="cadl1" x="884" y="885">0</text>
          <text class="cadt big" x="918" y="922" textLength="552" lengthAdjust="spacing">1/1 4 6 8 1 7 5 2 6 7 3 7 4 5 2 2 7 8 3 4 8 5 3 7 4 4 9 5 4 7 5 1 5 2</text>
          <text class="cadt big" x="1020" y="922" textLength="200" lengthAdjust="spacing">7 3 2 7 6 8 4 7 2 3</text>
          <path d="M520 903V850" stroke="#0c0" stroke-width="3"/><path d="m516 852 4-10 4 10z" fill="#0c0"/>
          <path d="M520 902h50" stroke="#f00" stroke-width="4"/><path d="m568 897 14 5-14 6z" fill="#f00"/>
          <text class="axy" x="532" y="856">Y</text><text class="axx" x="566" y="888">X</text>
        </svg>
      </div>
      <div class="toolrow rb">
        <i class="gr"></i>
        <span class="it"><svg class="ic"><use href="#ortho"/></svg>正交</span>
        <span class="it tog"><svg class="ic"><use href="#snap"/></svg>对象捕捉</span>
        <span class="it tog"><svg class="ic"><use href="#dyni"/></svg>动态输入</span><i class="vs"></i>
        <span class="it"><svg class="ic"><use href="#xpt"/></svg>交点</span>
        <span class="it tog"><svg class="ic"><use href="#perp"/></svg>垂点</span>
        <span class="it tog"><svg class="ic"><use href="#midp"/></svg>中点</span>
        <span class="it"><svg class="ic"><use href="#vert"/></svg>顶点</span>
        <span class="it m3"><svg class="ic"><use href="#coord"/></svg>坐标</span><i class="vs"></i>
        <span class="cb w70b">不偏移<i class="dn"></i></span><i class="vs vx"></i>
        <span class="lab">X=</span><span class="spin w70c">0<i class="up"></i></span>
        <span class="lab ly">Y=</span><span class="spin w70c">0<i class="up"></i></span><i class="vs vr"></i>
        <i class="chk"></i><span class="lab lk">旋转</span><span class="spin w82">0.000<i class="up"></i></span><i class="vs"></i>
      </div>
    </section>
  </div>

  <div class="status">
    <span class="sb s1"><tt>X=-198028 Y=134589</tt></span>
    <span class="sb s2"><span>层高<tt>:5.7m</tt></span></span>
    <span class="sb s3"><span>底标高<tt>:-0.05m</tt></span></span>
    <span class="sb s4"><tt>0</tt></span>
    <span class="sb s5">按鼠标左键指定第一个角点，或抬取构件图元</span>
  </div>

  <!-- 批量添加CAD图纸文件 window -->
  <div class="fd">
    <div class="fdtitle"><svg class="fdlogo"><use href="#logo"/></svg><span>批量添加CAD图纸文件</span><svg class="fdx" viewBox="0 0 14 14"><path d="m1 1 12 12M13 1 1 13" stroke="#888"/></svg></div>
    <div class="fdnav">
      <svg class="arw a1" viewBox="0 0 18 18"><path d="M17 9H2M8 3 2 9l6 6" fill="none" stroke="#ddd" stroke-width="2.400"/></svg>
      <svg class="arw a2" viewBox="0 0 18 18"><path d="M1 9h15M10 3l6 6-6 6" fill="none" stroke="#ddd" stroke-width="2.400"/></svg>
      <svg class="arw a3" viewBox="0 0 10 18"><path d="m2 7 3 3 3-3" fill="none" stroke="#ddd" stroke-width="1.500"/></svg>
      <svg class="arw a4" viewBox="0 0 18 18"><path d="M9 17V2M3 8l6-6 6 6" fill="none" stroke="#777" stroke-width="2.400"/></svg>
      <div class="addr">
        <svg class="afold" viewBox="0 0 16 24"><path d="M0 0h16v24H0z" fill="#fde28a"/><path d="M11 18h5v6h-5z" fill="#f1c34d"/></svg>
        <span class="cr1">«</span><span>DWG版_V2.0</span><span class="cr2">›</span><span>地下室</span>
        <span class="addrr"><svg class="dnv" viewBox="0 0 12 12"><path d="m2 4 4 4 4-4" fill="none" stroke="#555" stroke-width="1.400"/></svg><i class="addrs"></i><svg class="rfr" viewBox="0 0 16 16"><path d="M8 3a6 6 0 1 1-5 3M8 0v5" fill="none" stroke="#777" stroke-width="1.600"/></svg></span>
      </div>
      <div class="srch"><span>搜索"地下室"</span><svg class="mg" viewBox="0 0 16 16"><circle cx="10" cy="6" r="4.500" fill="none" stroke="#666" stroke-width="1.400"/><path d="m7 10-5 5" stroke="#666" stroke-width="2"/></svg></div>
    </div>
    <div class="fdband">
      <svg class="vi" viewBox="0 0 22 26"><path d="M1 2h4v5H1zM1 10h4v5H1zM1 18h4v5H1z" fill="#ddd" stroke="#999"/><path d="M8 3h5M15 3h5M8 6h5M15 6h5M8 11h5M15 11h5M8 14h5M15 14h5M8 19h5M15 19h5M8 22h5M15 22h5" stroke="#888" stroke-dasharray="2 1"/></svg>
      <i class="bd"></i>
      <svg class="vp" viewBox="0 0 20 20"><rect x="1" y="1" width="18" height="18" fill="#fff" stroke="#8c8c8c"/><rect x="10" y="1" width="9" height="18" fill="#3f8fd8"/></svg>
      <svg class="help" viewBox="0 0 22 22"><circle cx="11" cy="11" r="10.500" fill="#1f7ad0"/><text x="11" y="16" class="qm">?</text></svg>
    </div>
    <div class="fdbody">
      <div class="fdleft">
        <div class="fl l1"><svg class="fli"><path d="M0 5h17v10H0z" fill="#ddd"/><path d="M0 10h17v5H0z" fill="#555"/><path d="M3 0h11l3 5H0z" fill="#eee"/></svg>娱乐 (E:)</div>
        <div class="fl l2"><svg class="fli"><rect width="20" height="16" fill="#1e8fe6"/><rect y="14" width="20" height="2" fill="#0a4f96"/></svg>桌面</div>
        <div class="fl l3"><svg class="fli"><path d="M2 17q-3-6 3-7 2-7 8-5 5 2 4 6 3 1 3 6z" fill="#2b80d8"/></svg>OneDrive</div>
        <div class="fl l4"><svg class="fli"><circle cx="9" cy="6" r="5" fill="#7a6a4a"/><path d="M2 20q1-8 7-8t7 8z" fill="#4a5a4a"/></svg>dell</div>
      </div>
      <div class="fdvs"><svg class="fdc" viewBox="0 0 12 10"><path d="m2 2 4 5 4-5" fill="none" stroke="#555" stroke-width="1.600"/></svg></div>
      <div class="fdlist">
        <div class="fh"><i class="caret"></i><span class="c1">修改日期</span><span class="c2">类型</span><span class="c3">大小</span></div>
        <div class="fr"><svg class="fic"><use href="#dwg"/></svg><span class="fname">B块地下室底板结构2.0</span><span class="fdate">2018/4/20 17:53</span><span class="ftype">DWG 文件</span><span class="fsize">9,013 KB</span></div>
        <div class="fr"><svg class="fic"><use href="#dwg"/></svg><span class="fname">B块地下室底板上附加筋X向</span><span class="fdate">2018/4/18 23:38</span><span class="ftype">DWG 文件</span><span class="fsize">8,777 KB</span></div>
        <div class="fr"><svg class="fic"><use href="#dwg"/></svg><span class="fname">B块地下室底板上附加筋Y向</span><span class="fdate">2018/4/18 23:38</span><span class="ftype">DWG 文件</span><span class="fsize">8,770 KB</span></div>
        <div class="fr"><svg class="fic"><use href="#dwg"/></svg><span class="fname">B块地下室底板下附加筋X向</span><span class="fdate">2018/4/18 23:38</span><span class="ftype">DWG 文件</span><span class="fsize">8,735 KB</span></div>
        <div class="fr"><svg class="fic"><use href="#dwg"/></svg><span class="fname">B块地下室底板下附加筋Y向</span><span class="fdate">2018/4/18 23:38</span><span class="ftype">DWG 文件</span><span class="fsize">8,742 KB</span></div>
        <div class="fr"><svg class="fic"><use href="#dwg"/></svg><span class="fname">B块地下室顶板结构2.0</span><span class="fdate">2018/4/10 20:37</span><span class="ftype">DWG 文件</span><span class="fsize">3,224 KB</span></div>
        <div class="fr"><svg class="fic"><use href="#dwg"/></svg><span class="fname">B块地下一层结构2.0</span><span class="fdate">2018/4/11 0:24</span><span class="ftype">DWG 文件</span><span class="fsize">21,709 KB</span></div>
        <div class="fr"><svg class="fic"><use href="#dwg"/></svg><span class="fname">地下2层墙柱</span><span class="fdate">2018/4/20 17:39</span><span class="ftype">DWG 文件</span><span class="fsize">551 KB</span></div>
        <div class="fr"><svg class="fic"><use href="#dwg"/></svg><span class="fname">地下柱配筋图2.0</span><span class="fdate">2018/4/20 17:53</span><span class="ftype">DWG 文件</span><span class="fsize">4,950 KB</span></div>
        <div class="fr"><svg class="fic"><use href="#dwg"/></svg><span class="fname">说明目录楼梯坡道2.0</span><span class="fdate">2018/4/11 0:24</span><span class="ftype">DWG 文件</span><span class="fsize">5,746 KB</span></div>
        <div class="fhs"><i class="cl"></i><i class="fthumb"></i><i class="cr"></i></div>
      </div>
    </div>
    <div class="fdfoot">
      <div class="ff1"><span class="fnl">文件名(N):</span><span class="finp"><svg class="dnv" viewBox="0 0 12 12"><path d="m2 4 4 4 4-4" fill="none" stroke="#555" stroke-width="1.200"/></svg></span><span class="fsel"><span class="fselt">DWG文件与矢量图文件(*.DWG</span><svg class="dnv" viewBox="0 0 12 12"><path d="m2 4 4 4 4-4" fill="none" stroke="#555" stroke-width="1.200"/></svg></span></div>
      <div class="ff2"><span class="fb">打开(O)</span><span class="fb">取消</span></div>
    </div>
  </div>

  <!-- error dialog -->
  <div class="err">
    <div class="errtop">
      <div class="errtitle"><svg class="einfo"><use href="#info"/></svg><span class="ettext">广联达-云翻样建模-H:\2018年工作\无锡料单\...</span>
        <span class="ewb"><svg class="wb" viewBox="0 0 14 14"><path d="M1 7h12" stroke="#222"/></svg><svg class="wb" viewBox="0 0 14 14"><path d="M1 1h12v12H1z" fill="none" stroke="#ccc"/></svg><svg class="wb" viewBox="0 0 14 14"><path d="m1 1 12 12M13 1 1 13" stroke="#222"/></svg></span>
      </div>
      <div class="errmsg"><p>本对话框表明系统使用出现问题，请根据提示解决。我们对此引起的不便表示抱歉。</p><svg class="elogo"><use href="#logo"/></svg></div>
    </div>
    <div class="errmid">
      <p class="trace">Access violation at address 60D04CF1 in module 'AcSignCore16.dll'.<br>Read of address FFD43760.</p>
      <p class="more-info">要获得更多技术信息，<a class="lnk">请点击此处。</a></p>
    </div>
    <div class="errfoot"><span class="eb pri"><span>详细信息<tt>(I)</tt></span></span><span class="eb"><span>确定<tt>(O)</tt></span></span></div>
  </div>

  <!-- input method bar -->
  <div class="angel"><svg viewBox="0 0 52 18" width="52" height="18"><path d="M0 2q12 0 18 8l-4 6Q4 12 0 2zM52 2q-12 0-18 8l4 6q10-4 14-14z" fill="#ddd" stroke="#888"/><circle cx="26" cy="8" r="7" fill="#eec95a"/><rect x="18" y="12" width="16" height="6" fill="#b59a72"/></svg></div>
  <div class="ime">
    <div class="imel1"><b class="wb5">智能五笔</b><i class="dot"></i><svg class="kb" viewBox="0 0 22 20"><rect width="22" height="20" rx="2" fill="#7fbdf0"/><path d="M3 5h16M3 9h16M3 13h16" stroke="#fff" stroke-dasharray="2 1" stroke-width="2"/></svg><span class="iname">智能陈桥汉字输入系统<tt>7.4</tt>版</span><span class="iauth">作者：陈虎</span></div>
    <div class="imel2"><svg class="ich" viewBox="0 0 8 16"><path d="M7 1 1 8l6 7" fill="none" stroke="#999"/></svg><span class="iurl">智能陈桥主页：<tt>http://www.znwb.com</tt></span></div>
    <div class="imeicons">
      <svg class="ii" viewBox="0 0 22 26"><circle cx="9" cy="9" r="8" fill="#d8ecfa" stroke="#7fb2da" stroke-width="2"/><path d="m14 15 7 9" stroke="#e2a030" stroke-width="3"/></svg>
      <svg class="ii" viewBox="0 0 16 26"><circle cx="7" cy="6" r="5" fill="#1d63b8"/><path d="M0 24q0-12 7-12t7 12z" fill="#1d63b8"/><path d="M13 16v9M9 20h7" stroke="#58b03a" stroke-width="3"/></svg>
      <svg class="ii" viewBox="0 0 16 26"><path d="M11 1l4 3-10 19-4 2v-5z" fill="#f0b83a" stroke="#b87a1a"/><path d="m11 1 4 3-2 3-4-3z" fill="#e2553a"/></svg>
    </div>
  </div>
  <div class="ball"><span>40</span></div>
</div>
</body>
</html>
```

FILE: styles.css
```css
* { box-sizing: border-box; }
html, body { margin: 0; height: 100%; background: #f0f0f0; overflow: hidden; }
body { font: 15px/1 "Noto Sans CJK SC", "Liberation Sans", sans-serif; color: #111; }
.defs { position: absolute; }
i, em { font-style: normal; display: block; flex: none; }
b { font-weight: 400; }
tt { font: 14px/1 "Liberation Mono", monospace; letter-spacing: -.9px; }
p { margin: 0; }

.app { position: relative; width: 1920px; height: 1030px; display: flex; flex-direction: column; filter: blur(.35px); overflow: hidden; }

/* title */
.titlebar { height: 30px; background: #fff; display: flex; align-items: center; padding-left: 2px; flex: none; }
.tlogo { width: 20px; height: 20px; margin-right: 5px; }
.ttext { color: #777; font-size: 15.400px; }
.wbtns { margin-left: auto; display: flex; gap: 43px; padding-right: 24px; }
.wb { width: 13px; height: 13px; flex: none; }

/* menu */
.menubar { height: 31px; flex: none; display: flex; align-items: center; background: #efefef; color: #666; padding-left: 7px; gap: 13px; }
.menubar .gr { margin-right: -6px; height: 26px; }
.sugg { word-spacing: 6px; }
.gr { width: 3px; height: 27px; border-left: 1px solid #a8a8a8; border-right: 1px solid #fff; flex: none; }
.vs { width: 2px; height: 30px; border-left: 1px solid #bbb; border-right: 1px solid #fff; flex: none; }
.dn { width: 0; height: 0; border: 3.500px solid transparent; border-top: 4px solid #111; border-bottom: 0; margin-left: 6px; flex: none; }
.dn.dis { border-top-color: #aaa; }
.dn.tight { margin-left: -2px; }
.more { font-size: 15px; font-weight: 700; margin-left: auto; align-self: flex-start; margin-top: 2px; }

/* toolbars */
.toolrow { display: flex; align-items: center; background: #efefef; flex: none; }
.it { display: flex; align-items: center; gap: 5px; flex: none; white-space: nowrap; }
.it.off { color: #aaa; }
.ic { width: 20px; height: 20px; flex: none; display: block; }
.sg { font-size: 18px; font-weight: 700; text-align: center; line-height: 20px; color: #111; }
.r1 { height: 37px; border-top: 2px solid #b4b4b4; border-bottom: 2px solid #b4b4b4; }
.seg { display: flex; align-items: center; height: 33px; flex: none; }
.s1a { width: 190px; padding-left: 7px; border-right: 1px solid #aaa; }
.ic-doc { margin-left: 5px; }
.ic-open { margin-left: 9px; }
.ic-save { margin-left: 9px; }
.s1a .vs { margin-left: 7px; }
.ic-undo { margin-left: 8px; }
.s1a .dn { margin-left: 9px; }
.s1a .dn.dis { margin-left: 8px; }
.s1a .more { margin-right: 8px; }
.s1b { width: 876px; padding: 0 5px 0 6px; gap: 8.500px; border-right: 1px solid #aaa; }
.s1b .gr { margin-right: -3.500px; }
.s1c { flex: 1; padding-left: 8px; gap: 8px; }
.s1c .gr { margin-right: -5px; }
.s1c .dn { margin-left: 2px; }
.s1c .dn.tight { margin-left: -1px; }
.whitebox { background: #fff; padding: 4px 6px; height: 32px; }
.s1c .whitebox { width: 75px; margin-right: -2px; gap: 2px; }

.main { flex: 1; display: flex; min-height: 0; padding-top: 2px; }

/* left nav */
.nav { width: 205px; flex: none; display: flex; flex-direction: column; padding-top: 2px; height: 900px; }
.phead { height: 18px; display: flex; justify-content: space-between; align-items: center; border: 1px solid #888; border-width: 1px 1px 1px 0; font-size: 16px; background: #efefef; flex: none; }
.ptools { display: flex; gap: 10px; padding-right: 4px; }
.pin { width: 13px; height: 13px; }
.navbtn { height: 27px; border: 1px solid #aaa; border-right-color: #666; border-bottom: 2px solid #888; display: flex; align-items: center; justify-content: center; background: #efefef; flex: none; }
.nb1 { margin-top: 2px; }
.nb2 { margin-top: 1px; }
.navtools { height: 32px; margin-top: 1px; border: 1px solid #bbb; background: #efefef; display: flex; align-items: center; gap: 6px; padding-left: 8px; flex: none; }
.pm { width: 22px; height: 22px; }
.tree { flex: 1; margin: 1px 1px 2px 3px; background: #fff; border: 2px solid #a0a0a0; overflow: hidden; }
.navbtn.lo { height: 27px; border-width: 1px; border-color: #bbb #999 #999 #bbb; }
.n, .k { height: 20px; display: flex; align-items: center; white-space: nowrap; }
.n { padding-left: 9px; }
.chev { width: 7px; height: 7px; border: solid #aaa; border-width: 2px 2px 0 0; transform: rotate(45deg); margin-right: 2px; }
.chev.dn-c { border-color: #444; transform: rotate(135deg); margin-right: 2px; margin-left: 1px; margin-top: -4px; }
.st { width: 9px; border-top: 1px dotted #888; }
.fi { width: 19px; height: 19px; margin-right: 5px; flex: none; }
.kids { margin-left: 37px; background: repeating-linear-gradient(#888 0 1px, transparent 1px 2px) 0 0 / 1px calc(100% - 10px) no-repeat; }
.br { width: 13px; border-top: 1px dotted #888; }
.ti { width: 18px; height: 18px; margin: 0 5px 0 3px; flex: none; }
.selt { background: #ddd; margin-left: -3px; padding: 2px 4px 2px 3px; }
.k.sel .ti { background: #eee; }

/* drawing panel */
.dwgp { width: 233px; margin-left: 8px; flex: none; padding-top: 2px; height: 900px; display: flex; flex-direction: column; }
.phead.blue { background: #0a4fe6; color: #fff; border: 0; }
.tabs { display: flex; align-items: flex-end; height: 26px; flex: none; }
.tab { height: 22px; padding: 0 5px; display: flex; align-items: center; background: #f0f0f0; border: 1px solid #ccc; border-bottom: 0; }
.tab.on { height: 26px; background: #fff; padding: 0 9px; border: 0; }
.pane { flex: 1; background: #fff; border: 1px solid #bbb; border-top: 0; padding: 7px 2px 3px 5px; display: flex; flex-direction: column; min-height: 0; border-right-width: 3px; }
.pbtns { display: flex; height: 28px; flex: none; }
.pbtns.b2 { margin-top: 4px; height: 27px; }
.pb { height: 100%; border: 1px solid #aaa; border-right-color: #999; border-bottom: 2px solid #999; display: flex; align-items: center; justify-content: center; background: #efefef; flex: none; }
.w72 { width: 72px; }
.w70 { width: 70px; margin-left: 1px; }
.w10 { width: 11px; }
.w10 .dn { margin: 0; }
.gapl { margin-left: 3px; }
.pmore { width: 15px; margin-left: auto; margin-right: 2px; align-items: flex-start; font-weight: 700; }
.pb.dis { color: #aaa; }
.frame { flex: 1; margin-top: 3px; border: 2px solid #aaa; display: flex; flex-direction: column; padding: 1px 4px 3px 1px; min-height: 0; }
.dg { display: grid; grid-template-columns: 26px 1fr; grid-template-rows: 31px repeat(8, 24px); font-size: 15px; }
.rh { background: #f0f0f0; display: flex; align-items: center; justify-content: center; border-bottom: 1px solid #bbb; border-right: 1px solid #ccc; font: 14px "Liberation Sans", sans-serif; }
.rh.top { border-bottom: 0; }
.rh.cur1 { background: #fbdcae; color: #b02a10; }
.dh { background: linear-gradient(#fadfa6, #e9b45e); color: #7f0a6e; display: flex; align-items: center; justify-content: center; font-size: 15.500px; }
.dc { display: flex; align-items: center; white-space: nowrap; overflow: hidden; border-bottom: 2px solid #ccc; border-right: 1px solid #ccc; }
.dc.ind { padding-left: 24px; }
.dc.cur { background: #d8eafb; border: 3px solid #666; padding-left: 0; }
.minus { width: 13px; height: 13px; border: 1px solid #aaa; background: linear-gradient(#333,#333) center/7px 1px no-repeat, #fff; margin: 0 7px 0 2px; flex: none; }
.dc.yel { background: #ff0; padding-left: 38px; position: relative; border-bottom: 0; }
.ell { position: absolute; left: 11px; top: -3px; width: 20px; height: 13px; border: solid #bbb; border-width: 0 0 1px 1px; }
.hs { margin-top: auto; height: 18px; background: #f0f0f0; display: flex; align-items: center; padding: 0 3px; }
.hs .thumb { width: 21px; height: 18px; background: #cdcdcd; margin-left: 7px; }
.cl, .cr { width: 7px; height: 7px; border: solid #555; border-width: 2px 0 0 2px; transform: rotate(-45deg); margin-left: 6px; }
.cr { transform: rotate(135deg); margin-left: auto; margin-right: 5px; }

/* workspace */
.work { flex: 1; min-width: 0; margin-left: 5px; display: flex; flex-direction: column; height: 900px; }
.r2 { height: 35px; padding-left: 5px; border-bottom: 2px solid #b4b4b4; border-right: 2px solid #bbb; gap: 8.500px; }
.r2 .g1 { margin-right: -4.500px; }
.flds { display: flex; gap: 5px; flex: none; }
.fld { display: flex; }
.cb { background: #fff; height: 27px; display: flex; align-items: center; padding-left: 4px; flex: none; white-space: nowrap; }
.w57 { width: 57px; padding-left: 4px; }
.w73 { width: 73px; }
.ca { width: 12px; height: 27px; background: #f6f6f6; display: flex; align-items: center; justify-content: center; }
.ca14 { width: 14px; }
.ca .dn { margin: 0; }
.r2 .g2 { margin: 0 -4.500px 0 -4.500px; }
.r2 .vs { margin-right: -1px; margin-left: -1px; }
.r2 .vs.v6 { margin: 0 0 0 -3px; }
.r2 .dn.dis { margin-left: 1px; }
.r2 .it:last-of-type { margin-left: -3px; }
.rowwrap { display: flex; flex: none; margin-top: 2px; }
.rw3 { padding-left: 711px; }
.rw4 { padding-left: 0; }
.rw5 { padding-left: 326px; }
.r3 { height: 31px; padding: 0 10px 0 5px; gap: 9px; width: 525px; border: solid #aaa; border-width: 0 1px 2px 1px; }
.r3 .gr { margin-right: -7px; }
.r3 .dn { margin-left: 2px; }
.r4 { height: 33px; padding: 0 10px 0 10px; gap: 8.500px; width: 1376px; border: solid #b4b4b4; border-width: 0 1px 2px 0; }
.r4 .gr { margin: 0 -3.500px 0 -2.500px; }
.r4 .gr.gf { margin: 0 -8.500px 0 0; }
.r4 .gr.g4 { margin: 0 -3.500px 0 -4.500px; }
.r4 .vs { margin-left: -2px; }
.r4 .dk { margin-left: -6px; }
.r4 .dn.tight { margin-left: -1px; }
.wcad { margin-right: 2px; }
.wcad2 { margin-right: 5px; }
.sel2 { width: 61px; height: 27px; gap: 4px; padding: 0 0 0 7px; }
.sel2 .ic { width: 16px; }
.r5 { height: 33px; padding: 0 0 0 5px; gap: 8px; width: 606px; border: solid #b4b4b4; border-width: 0 1px 2px 0; }
.r5 .gr { margin-right: -2px; }
.canvas { flex: 1; background: #000; min-height: 0; position: relative; }
.cadsvg { position: absolute; inset: 0; width: 100%; height: 100%; }
.reds path { fill: none; stroke: #f00; stroke-width: 1.400; }
.wband { fill: none; stroke: #eee; stroke-width: 15; stroke-dasharray: 5 2; }
.wband.wb2 { stroke-width: 5; }
.cadt { fill: #ddd; font: 22px "Liberation Sans", sans-serif; }
.cadt.big { font-size: 23px; }
.cadl1 { fill: #ccc; font: 20px "Liberation Sans", sans-serif; }
.axy { fill: #0a0; font: 15px "Liberation Sans", sans-serif; }
.axx { fill: #a00; font: 15px "Liberation Sans", sans-serif; }
.rb { height: 35px; padding-left: 5px; gap: 5px; border-bottom: 1px solid #b4b4b4; overflow: hidden; }
.rb .gr { margin-right: 1px; }
.rb .vs { margin: 0 2px 0 4px; }
.tog { background: #f8f8f8; height: 29px; padding: 0 1px 0 6px; }
.tog + .tog { margin-left: -3px; }
.m3 { margin-left: 3px; }
.w70b { width: 70px; margin: 0 4px; padding-right: 4px; justify-content: space-between; }
.rb .vs.vx { margin-left: -3px; }
.lab { color: #bbb; }
.spin { background: #fff; height: 24px; border: 1px solid #ddd; color: #aaa; display: flex; align-items: center; justify-content: flex-end; gap: 4px; padding-right: 3px; flex: none; }
.up { width: 0; border: 4px solid transparent; border-bottom: 5px solid #aaa; border-top: 0; }
.w70c { width: 70px; }
.w82 { width: 82px; }
.ly { margin-left: 36px; }
.rb .vs.vr { margin-left: 32px; }
.chk { width: 13px; height: 13px; border: 1px solid #888; background: #fff; }
.lk { color: #111; margin: 0 4px; }

/* status */
.status { height: 25px; flex: none; display: flex; background: #efefef; border-top: 1px solid #bbb; gap: 4px; }
.sb { display: flex; align-items: center; border: 1px solid #bbb; border-top-color: #999; border-left-color: #999; padding-left: 2px; flex: none; white-space: nowrap; }
.s1 { width: 186px; }
.s1 tt { letter-spacing: -1.100px; }
.s2 { width: 97px; }
.s3 { width: 123px; }
.s4 { width: 45px; }
.s5 { margin-left: 9px; flex: 1; }

/* file dialog */
.fd { position: absolute; left: 969px; top: 311px; width: 941px; height: 589px; background: #fff; display: flex; flex-direction: column; box-shadow: 0 0 2px rgba(0,0,0,.4); }
.fdtitle { height: 36px; display: flex; align-items: center; padding: 0 13px 0 11px; color: #999; flex: none; }
.fdlogo { width: 20px; height: 20px; margin-right: 4px; }
.fdx { width: 12px; height: 12px; margin-left: auto; }
.fdnav { height: 45px; display: flex; align-items: center; flex: none; padding-bottom: 1px; }
.arw { width: 17px; height: 18px; flex: none; }
.a1 { margin-left: 17px; }
.a2 { margin-left: 21px; }
.a3 { width: 8px; margin-left: 19px; }
.a4 { margin-left: 9px; }
.addr { margin-left: 10px; width: 523px; height: 28px; border: 1px solid #d9d9d9; display: flex; align-items: center; gap: 12px; padding-left: 3px; font-size: 15.500px; }
.afold { width: 16px; height: 24px; margin-right: -1px; }
.cr1 { font-size: 15px; }
.cr2 { margin-right: 3px; }
.addrr { margin-left: auto; display: flex; align-items: center; gap: 5px; padding-right: 3px; }
.dnv { width: 12px; height: 12px; flex: none; }
.addrs { width: 1px; height: 26px; background: #d9d9d9; }
.rfr { width: 16px; height: 16px; margin: 0 2px 0 3px; }
.srch { margin-left: 16px; width: 252px; height: 28px; border: 1px solid #d9d9d9; display: flex; align-items: center; padding: 0 9px 0 11px; color: #777; justify-content: space-between; }
.mg { width: 15px; height: 15px; }
.fdband { height: 40px; background: #f5f6f7; display: flex; align-items: center; flex: none; padding-left: 788px; }
.vi { width: 21px; height: 26px; }
.bd { width: 0; border: 4px solid transparent; border-top: 6px solid #335; border-bottom: 0; margin-left: 12px; }
.vp { width: 20px; height: 20px; margin-left: 28px; }
.help { width: 22px; height: 22px; margin-left: 25px; }
.qm { fill: #fff; font: 700 15px "Liberation Sans", sans-serif; text-anchor: middle; }
.fdbody { flex: 1; display: flex; min-height: 0; }
.fdleft { width: 176px; position: relative; overflow: hidden; flex: none; }
.fl { position: absolute; display: flex; align-items: center; gap: 7px; white-space: nowrap; color: #222; }
.fli { width: 20px; height: 20px; }
.l1 { left: 42px; top: 254px; }
.l2 { left: 31px; top: 294px; }
.l3 { left: 41px; top: 324px; }
.l4 { left: 43px; top: 354px; }
.fdvs { width: 22px; background: #f0f0f0; display: flex; align-items: flex-end; justify-content: center; padding-bottom: 5px; flex: none; }
.fdc { width: 12px; height: 10px; }
.fdlist { flex: 1; position: relative; display: flex; flex-direction: column; min-width: 0; padding-left: 2px; }
.fh { height: 41px; position: relative; color: #555; flex: none; }
.fh span { position: absolute; top: 0; height: 33px; display: flex; align-items: center; padding-left: 7px; border-left: 1px solid #e5e5e5; }
.fh .c1 { left: 340px; }
.fh .c2 { left: 489px; }
.fh .c3 { left: 639px; }
.caret { position: absolute; left: 175px; top: -1px; width: 7px; height: 7px; border: solid #888; border-width: 1px 0 0 1px; transform: rotate(45deg); }
.fr { height: 26.200px; display: flex; align-items: center; position: relative; white-space: nowrap; flex: none; }
.fic { width: 18px; height: 24px; margin-left: 23px; flex: none; }
.fname { position: absolute; left: 47px; color: #222; }
.fdate { position: absolute; left: 347px; color: #777; }
.ftype { position: absolute; left: 497px; color: #777; }
.fsize { position: absolute; right: 10px; color: #777; }
.fhs { position: absolute; left: 2px; right: 0; bottom: 0; height: 20px; background: #f0f0f0; display: flex; align-items: center; }
.fthumb { width: 686px; height: 20px; background: #cdcdcd; margin-left: 6px; }
.fhs .cl { margin-left: 8px; border-width: 1.500px 0 0 1.500px; }
.fhs .cr { border-width: 1.500px 0 0 1.500px; margin-right: 6px; }
.fdfoot { height: 100px; background: #f0f0f0; flex: none; padding: 14px 22px 0 163px; display: flex; flex-direction: column; }
.ff1 { display: flex; align-items: center; height: 32px; }
.fnl { width: 78px; color: #222; flex: none; }
.finp { width: 428px; height: 32px; background: #fff; border: 1px solid #888; border-bottom-width: 2px; display: flex; align-items: center; justify-content: flex-end; padding-right: 5px; }
.fsel { width: 234px; height: 31px; margin-left: 16px; background: #e1e1e1; border: 1px solid #adadad; display: flex; align-items: center; padding-left: 4px; }
.fselt { width: 206px; overflow: hidden; white-space: nowrap; }
.fsel .dnv { margin-left: 6px; }
.ff2 { display: flex; gap: 18px; padding-left: 522px; margin-top: 8px; }
.fb { width: 107px; height: 29px; background: #e1e1e1; border: 1px solid #adadad; border-width: 1px 2px 2px 1px; display: flex; align-items: center; justify-content: center; }

/* error dialog */
.err { position: absolute; left: 689px; top: 391px; width: 542px; height: 288px; background: #f0f0f0; border: 1px solid #2b88d8; display: flex; flex-direction: column; }
.errtop { height: 106px; background: #fff; border-bottom: 2px solid #b4b4b4; flex: none; }
.errtitle { height: 35px; display: flex; align-items: center; padding-left: 10px; }
.einfo { width: 20px; height: 20px; margin-right: 5px; flex: none; }
.ettext { font-size: 15px; white-space: nowrap; }
.ewb { margin-left: auto; display: flex; gap: 44px; padding-right: 23px; }
.errmsg { display: flex; padding: 17px 16px 0 16px; justify-content: space-between; }
.errmsg p { width: 456px; line-height: 15px; font-size: 15px; }
.elogo { width: 40px; height: 42px; margin-top: -1px; }
.errmid { height: 130px; padding: 15px 16px 0; border-bottom: 2px solid #b4b4b4; display: flex; flex-direction: column; flex: none; }
.trace { font: 13.500px/15px "Liberation Mono", monospace; letter-spacing: -.77px; color: #222; white-space: nowrap; }
.more-info { margin-top: 56px; }
.lnk { color: #0645e0; text-decoration: underline; }
.errfoot { flex: 1; display: flex; gap: 12px; padding: 11px 20px 0 0; justify-content: flex-end; }
.eb { width: 91px; height: 28px; background: #e1e1e1; border: 1px solid #adadad; display: flex; align-items: center; justify-content: center; }
.eb.pri { width: 116px; border: 2px solid #0f78d4; }

/* input method */
.ime { position: absolute; left: 1180px; top: 982px; width: 730px; height: 48px; background: #ffffc8; border: 3px solid #7a6422; border-radius: 10px 0 0 10px; color: #17688c; overflow: hidden; }
.imel1 { display: flex; align-items: center; height: 23px; padding: 1px 0 0 8px; }
.wb5 { font-size: 21px; font-weight: 900; color: #8f2020; text-shadow: 2px 2px 2px #777; width: 92px; white-space: nowrap; }
.dot { width: 14px; height: 14px; border-radius: 50%; background: #0a33f0; flex: none; }
.kb { width: 22px; height: 20px; margin-left: 5px; flex: none; }
.iname { margin-left: 16px; font-size: 20px; white-space: nowrap; }
.iname tt { font-size: 16px; letter-spacing: -.6px; }
.iauth { margin-left: 29px; font-size: 19.600px; }
.imel2 { display: flex; align-items: center; height: 20px; padding-left: 7px; }
.ich { width: 8px; height: 16px; }
.iurl { margin-left: 50px; font-size: 19px; white-space: nowrap; }
.iurl tt { font-size: 17px; letter-spacing: 0; }
.imeicons { position: absolute; left: 643px; top: 9px; display: flex; gap: 4px; align-items: center; }
.ii { height: 26px; width: 16px; }
.ii:first-child { width: 22px; }
.angel { position: absolute; left: 1850px; top: 968px; height: 18px; }
.ball { position: absolute; left: 1896px; top: 971px; width: 60px; height: 60px; border-radius: 50%; background: radial-gradient(circle at 40% 40%, #7fd67f, #23a043); border: 2px solid #e8f4e8; color: #fff; font: 700 14px "Liberation Sans", sans-serif; display: flex; align-items: center; padding-left: 6px; }
```
